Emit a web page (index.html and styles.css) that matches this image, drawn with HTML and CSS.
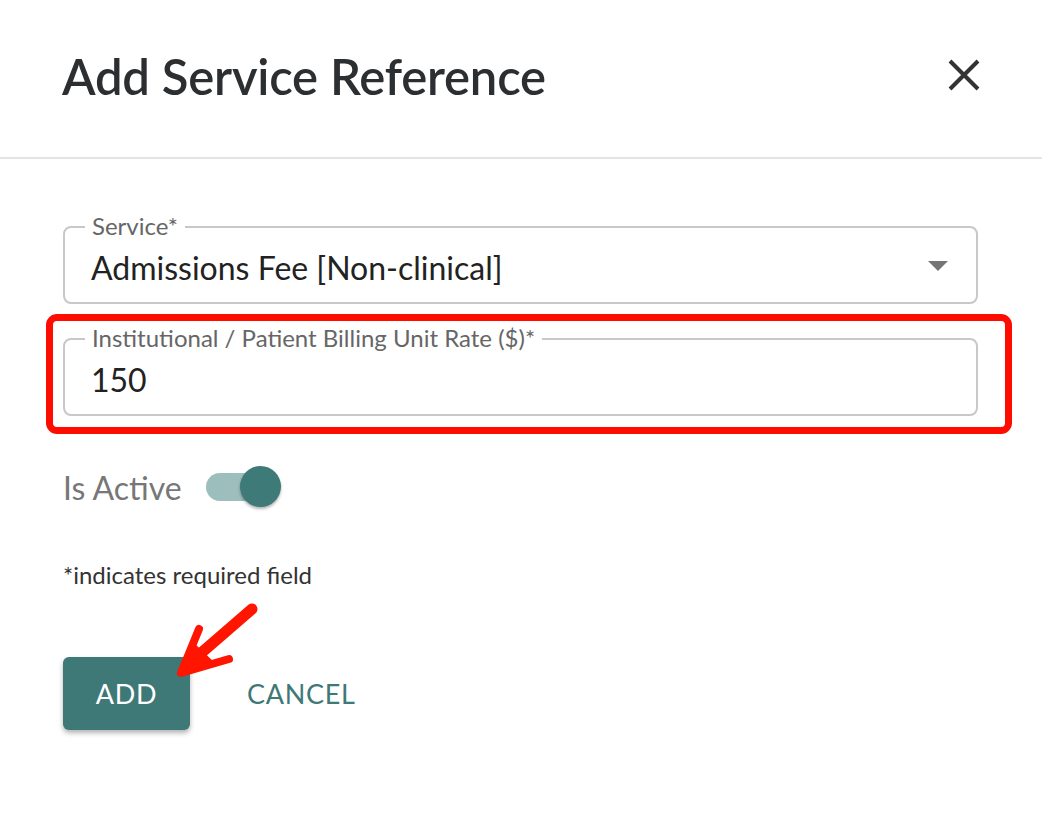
FILE: index.html
```html
<!DOCTYPE html>
<html lang="en">
<head>
<meta charset="utf-8">
<title>Add Service Reference</title>
<link rel="stylesheet" href="styles.css">
</head>
<body>
<div class="dialog">
  <header class="dialog-header">
    <h1 class="dialog-title">Add Service Reference</h1>
    <button class="close-btn" aria-label="Close">
      <svg width="32" height="32" viewBox="0 0 32 32"><path d="M2 2 L30 30 M30 2 L2 30" stroke="#333" stroke-width="4" stroke-linecap="butt" fill="none"/></svg>
    </button>
  </header>
  <div class="dialog-body">
    <div class="field">
      <span class="field-label">Service*</span>
      <span class="field-value">Admissions Fee [Non-clinical]</span>
      <svg class="select-arrow" width="20" height="10" viewBox="0 0 20 10"><path d="M0 0 H20 L10 10 Z" fill="#757575"/></svg>
    </div>
    <div class="field field-highlighted">
      <span class="field-label">Institutional / Patient Billing Unit Rate ($)*</span>
      <span class="field-value">150</span>
      <span class="highlight-box"></span>
    </div>
    <div class="switch-row">
      <span class="switch-label">Is Active</span>
      <span class="switch">
        <span class="switch-track"></span>
        <span class="switch-thumb"></span>
      </span>
    </div>
    <p class="required-note">*indicates required field</p>
    <div class="actions">
      <button class="btn btn-primary">ADD</button>
      <button class="btn btn-text">CANCEL</button>
      <svg class="pointer-arrow" width="100" height="80" viewBox="0 0 100 80">
        <path d="M89 9 L22 67" stroke="#ff1500" stroke-width="11" stroke-linecap="round" fill="none"/>
        <path d="M36 29 L18 73 L66 59" stroke="#ff1500" stroke-width="8" stroke-linecap="round" stroke-linejoin="round" fill="none"/>
        <path d="M30 42 L18 73 L52 63 Z" fill="#ff1500"/>
      </svg>
    </div>
  </div>
</div>
</body>
</html>
```
FILE: styles.css
```css
html, body {
  margin: 0;
  padding: 0;
  background: #ffffff;
}
body {
  font-family: Lato, "Open Sans", "Liberation Sans", sans-serif;
  color: #222;
}
.dialog {
  width: 1042px;
  min-height: 824px;
}
.dialog-header {
  height: 159px;
  border-bottom: 2px solid #e3e3e3;
  display: flex;
  align-items: center;
  justify-content: space-between;
  padding: 0 62px 0 62px;
  box-sizing: border-box;
}
.dialog-title {
  margin: 0;
  font-size: 49px;
  font-weight: 600;
  color: #2c2f31;
  letter-spacing: -0.2px;
  padding-bottom: 6px;
}
.close-btn {
  border: 0;
  background: none;
  padding: 0;
  width: 32px;
  height: 32px;
  display: flex;
  margin-bottom: 7px;
}
.dialog-body {
  padding: 67px 64px 0 63px;
}
.field {
  position: relative;
  border: 2px solid #c8c8c8;
  border-radius: 8px;
  height: 78px;
  box-sizing: border-box;
  display: flex;
  align-items: center;
  padding: 0 26px;
}
.field + .field {
  margin-top: 34px;
}
.field-label {
  position: absolute;
  top: -16px;
  left: 20px;
  padding: 0 7px;
  background: #fff;
  font-size: 24px;
  line-height: 28px;
  color: #666;
}
.field-value {
  font-size: 32px;
  color: #222;
  padding-top: 4px;
  flex: 1;
}
.select-arrow {
  margin-right: 2px;
  margin-top: 2px;
}
.highlight-box {
  position: absolute;
  top: -26px;
  left: -19px;
  right: -36px;
  bottom: -20px;
  border: 7px solid #ff0c00;
  border-radius: 11px;
  pointer-events: none;
}
.switch-row {
  display: flex;
  align-items: center;
  margin-top: 50px;
  gap: 24px;
}
.switch-label {
  font-size: 32px;
  color: #777;
}
.switch {
  position: relative;
  width: 75px;
  height: 42px;
  display: flex;
  align-items: center;
}
.switch-track {
  width: 64px;
  height: 28px;
  border-radius: 14px;
  background: #9cbebc;
}
.switch-thumb {
  position: absolute;
  right: 0;
  top: 0;
  width: 41px;
  height: 41px;
  border-radius: 50%;
  background: #3e7a78;
  box-shadow: 0 2px 3px rgba(0,0,0,0.3);
}
.required-note {
  margin: 52px 0 0 0;
  font-size: 24px;
  color: #333;
}
.actions {
  position: relative;
  display: flex;
  align-items: center;
  margin-top: 68px;
  gap: 57px;
}
.btn {
  font-family: Lato, "Open Sans", "Liberation Sans", sans-serif;
  font-size: 27px;
  border: 0;
  cursor: pointer;
  letter-spacing: 0.7px;
}
.btn-primary {
  width: 127px;
  height: 73px;
  background: #3e7877;
  color: #fff;
  border-radius: 6px;
  box-shadow: 0 3px 5px rgba(0,0,0,0.3);
}
.btn-text {
  background: none;
  color: #3e7877;
  padding: 0;
}
.pointer-arrow {
  position: absolute;
  left: 100px;
  top: -57px;
}
```
